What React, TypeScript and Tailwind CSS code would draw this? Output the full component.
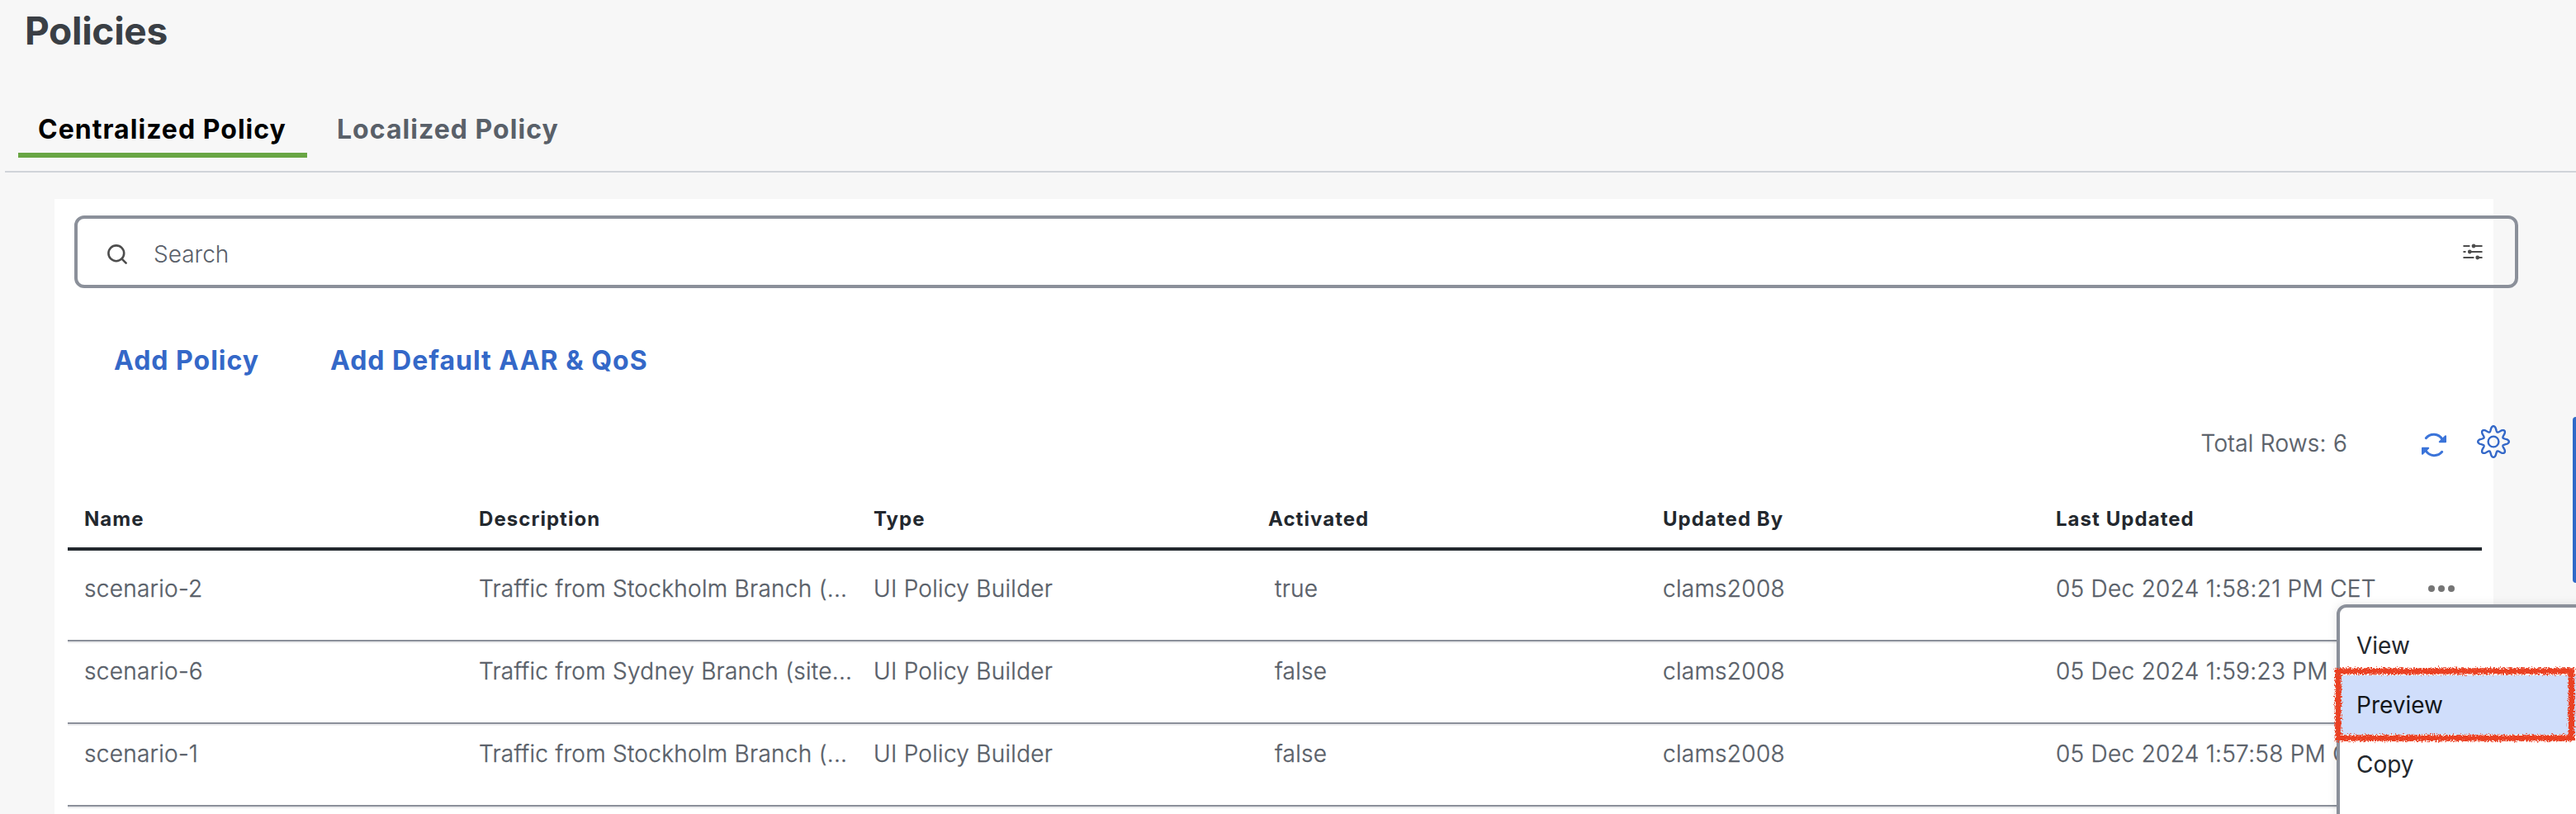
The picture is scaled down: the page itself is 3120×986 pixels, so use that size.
import React from "react";

const columns = "grid grid-cols-[478px_478px_478px_478px_476px_446px_1fr]";

const rows = [
  { name: "scenario-2", description: "Traffic from Stockholm Branch (...", active: "true", updated: "05 Dec 2024 1:58:21 PM CET" },
  { name: "scenario-6", description: "Traffic from Sydney Branch (site...", active: "false", updated: "05 Dec 2024 1:59:23 PM" },
  { name: "scenario-1", description: "Traffic from Stockholm Branch (...", active: "false", updated: "05 Dec 2024 1:57:58 PM C" },
];

function gearPath() {
  const points: string[] = [];
  const steps = 240;
  for (let i = 0; i < steps; i++) {
    const a = (i / steps) * Math.PI * 2;
    const wave = Math.cos(8 * a);
    const r = 15.6 + 3.2 * Math.sign(wave) * Math.pow(Math.abs(wave), 0.85);
    points.push(`${(20 + r * Math.cos(a)).toFixed(2)} ${(20 + r * Math.sin(a)).toFixed(2)}`);
  }
  return "M" + points.join("L") + "Z";
}

function SearchIcon() {
  return (
    <svg className="mt-[5px] h-6 w-6" viewBox="0 0 24 24" fill="none" stroke="#4d4d4d" strokeWidth="2.6" strokeLinecap="round">
      <circle cx="10.8" cy="10.8" r="9.4" />
      <path d="M17.6 17.6L22.6 22.6" />
    </svg>
  );
}

function FilterIcon() {
  return (
    <svg className="h-5 w-6" viewBox="0 0 24 20" fill="#4d4d4d" stroke="#4d4d4d" strokeWidth="2.2" strokeLinecap="round">
      <path d="M1.3 3H7.6M13 3H22.7M1.3 10H2.7M8 10H22.7M1.3 17H12.6M18 17H22.7" />
      <circle cx="13" cy="3" r="1.3" />
      <circle cx="8.3" cy="10" r="1.3" />
      <circle cx="17.7" cy="17" r="1.3" />
    </svg>
  );
}

function RefreshIcon() {
  return (
    <svg className="h-[30px] w-8" viewBox="0 0 32 30" fill="none" stroke="#3b74d9" strokeWidth="3" strokeLinecap="round" strokeLinejoin="round">
      <path d="M6.3 6.7C11.5 0.6 21.5 0.7 26 8.2" />
      <path d="M25.7 23.3C20.5 29.4 10.5 29.3 6 21.8" />
      <path d="M30 4.2V11.2H22.8ZM2 25.8V18.8H9.2Z" fill="#3b74d9" strokeWidth="2" />
    </svg>
  );
}

function GearIcon() {
  return (
    <svg className="h-10 w-10" viewBox="0 0 40 40" fill="none" stroke="#3468c8" strokeWidth="2.4" strokeLinejoin="round">
      <path d={gearPath()} />
      <circle cx="20" cy="20" r="6.4" />
    </svg>
  );
}

function RoughOutline() {
  return (
    <svg className="absolute top-[69px] -left-[9px] h-[100px] w-[298px]" viewBox="0 0 298 100" fill="none">
      <filter id="crayon" x="0" y="0" width="298" height="100" filterUnits="userSpaceOnUse">
        <feTurbulence type="fractalNoise" baseFrequency="0.6" numOctaves="2" seed="4" result="noise" />
        <feDisplacementMap in="SourceGraphic" in2="noise" scale="8" xChannelSelector="R" yChannelSelector="G" />
      </filter>
      <path d="M7 8H289.500V89H7Z" stroke="#ea3f23" strokeWidth="7.5" filter="url(#crayon)" />
    </svg>
  );
}

export default function App() {
  return (
    <div className="relative flex h-[986px] w-[3120px] flex-col overflow-hidden bg-[#f7f7f7] font-['Inter',sans-serif]">
      <h1 className="mt-[7px] ml-[30px] h-[60px] text-[46px] leading-[60px] font-bold tracking-[-0.3px] text-[#3a3f45]">Policies</h1>

      <nav className="mt-[58px] ml-[6px] flex h-[84px] border-b-2 border-[#d0d4d9] pl-4 text-[32px] leading-[64px] font-bold tracking-[1.03px]">
        <div className="flex h-[66px] w-[350px] flex-col border-b-6 border-[#69a644] pl-6 whitespace-nowrap text-black">Centralized Policy</div>
        <div className="ml-9 text-[#596069]">Localized Policy</div>
      </nav>

      <main className="mt-8 ml-[66px] flex h-[745px] w-[2954px] flex-col bg-white">
        <div className="mt-5 ml-6 flex h-[88px] w-[2960px] shrink-0 items-center rounded-xl border-4 border-[#8b909a] pl-9">
          <SearchIcon />
          <span className="mt-[6px] ml-8 text-[28px] font-light text-[#596069]">Search</span>
          <div className="mr-[39px] ml-auto"><FilterIcon /></div>
        </div>

        <div className="mt-[58px] ml-[72px] flex h-[60px] shrink-0 gap-[86px] text-[32px] leading-[60px] font-bold tracking-[1px] text-[#3468c8]">
          <span>Add Policy</span>
          <span>Add Default AAR &amp; QoS</span>
        </div>

        <div className="mt-[40px] flex h-[60px] w-[2974px] shrink-0 items-center justify-end">
          <span className="text-[28px] font-light tracking-[0.27px] text-[#596069] [-webkit-text-stroke:0.35px_#596069]">Total Rows: 6</span>
          <div className="mt-1 ml-[89px]"><RefreshIcon /></div>
          <div className="mb-1 ml-9"><GearIcon /></div>
        </div>

        <div className="mt-[26px] ml-4 w-[2924px] shrink-0">
          <div className={`${columns} h-[74px] border-b-4 border-[#23282e] pl-5 text-[24px] leading-[72px] font-bold tracking-[1.05px] text-[#23282e]`}>
            <span>Name</span>
            <span>Description</span>
            <span>Type</span>
            <span>Activated</span>
            <span>Updated By</span>
            <span>Last Updated</span>
          </div>
          {rows.map((row, index) => (
            <div key={row.name} className="border-b-2 border-[#ebebed]">
              <div className={`${columns} ${index === 0 ? "h-[110px] pt-4" : "h-[98px] pt-1"} border-b-2 border-[#8b909a] pl-5 text-[28px] leading-[60px] font-light tracking-[0.28px] whitespace-nowrap text-[#596069] [-webkit-text-stroke:0.35px_#596069]`}>
                <span>{row.name}</span>
                <span>{row.description}</span>
                <span>UI Policy Builder</span>
                <span className="pl-2">{row.active}</span>
                <span>clams2008</span>
                <span>{row.updated}</span>
                {index === 0 && (
                  <div className="flex h-[60px] items-center gap-1 pl-[5px]">
                    <i className="h-2 w-2 rounded-full bg-[#757575]" />
                    <i className="h-2 w-2 rounded-full bg-[#757575]" />
                    <i className="h-2 w-2 rounded-full bg-[#757575]" />
                  </div>
                )}
              </div>
            </div>
          ))}
        </div>
      </main>

      <div className="absolute top-[505px] left-[3116px] h-[201px] w-3 rounded-l bg-[#2f69c8]" />

      <div className="absolute top-[732px] left-[2830px] h-[320px] w-[340px] rounded-xl border-4 border-[#8b909a] bg-white pt-[10px] text-[28px] leading-[72px] font-normal text-[#23282e] shadow-[0_0_12px_rgba(0,0,0,0.1)]">
        <div className="pl-5">View</div>
        <div className="bg-[#d0defb] pl-5 text-[#14171a]">Preview</div>
        <div className="pl-5">Copy</div>
        <RoughOutline />
      </div>
    </div>
  );
}
